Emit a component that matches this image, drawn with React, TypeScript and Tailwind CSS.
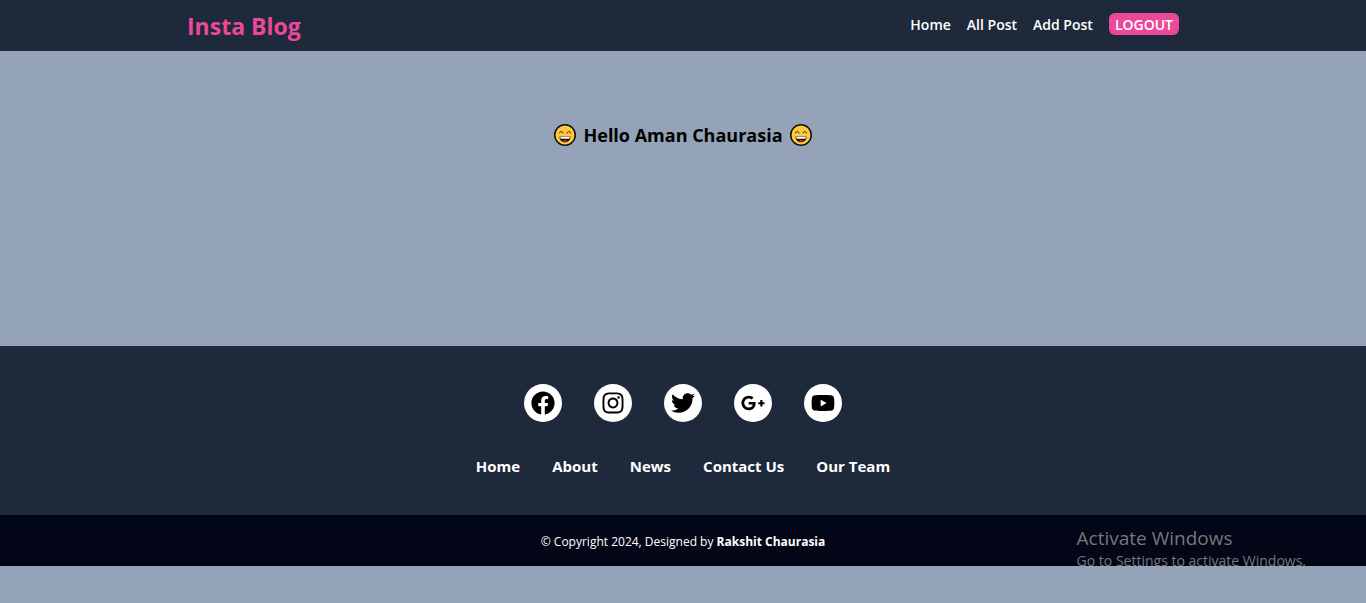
import React from "react";
import {
  FaFacebook,
  FaInstagram,
  FaTwitter,
  FaGooglePlusG,
  FaYoutube,
} from "react-icons/fa";

const navLinks = ["Home", "All Post", "Add Post"];
const footerLinks = ["Home", "About", "News", "Contact Us", "Our Team"];
const socials = [
  { name: "Facebook", Icon: FaFacebook },
  { name: "Instagram", Icon: FaInstagram },
  { name: "Twitter", Icon: FaTwitter },
  { name: "Google Plus", Icon: FaGooglePlusG },
  { name: "YouTube", Icon: FaYoutube },
];

function GrinFace() {
  return (
    <svg viewBox="0 0 44 44" className="size-[22px]" aria-hidden="true">
      <circle cx="22" cy="22" r="20.5" fill="#ffc83d" stroke="#111" strokeWidth="3" />
      <path
        d="M11 18c1.500-4 5.500-4 7 0M26 18c1.500-4 5.500-4 7 0"
        fill="none"
        stroke="#111"
        strokeWidth="2"
        strokeLinecap="round"
      />
      <path d="M11 25h22c0 7-4.500 11.500-11 11.500S11 32 11 25Z" fill="#111" />
      <path d="M12.500 25.500h19c0 2-.5 3-1 4h-17c-.5-1-1-2-1-4Z" fill="#fff" />
      <path d="M17 34c2-3 8-3 10 0-3 2-7 2-10 0Z" fill="#e8212e" />
    </svg>
  );
}

function Header() {
  return (
    <header className="bg-[#1e293b]">
      <div className="mx-auto flex h-[51px] max-w-[992px] items-center justify-between">
        <a href="#" className="text-[23px] leading-8 font-bold text-[#ec4899]">
          Insta Blog
        </a>
        <nav className="mb-[3px] flex items-center gap-4 text-sm leading-5 font-semibold text-white">
          {navLinks.map((label) => (
            <a key={label} href="#" className="pt-0.5">
              {label}
            </a>
          ))}
          <button type="button" className="rounded-md bg-[#ec4899] px-1.5 pt-0.5">
            LOGOUT
          </button>
        </nav>
      </div>
    </header>
  );
}

function Footer() {
  return (
    <footer>
      <div className="flex flex-col items-center bg-[#1e293b] pt-[38px] pb-[37px]">
        <ul className="flex gap-8">
          {socials.map(({ name, Icon }) => (
            <li key={name}>
              <a
                href="#"
                aria-label={name}
                className="flex size-[38px] items-center justify-center rounded-full bg-white text-black"
              >
                <Icon className="size-6" />
              </a>
            </li>
          ))}
        </ul>
        <ul className="mt-8 flex gap-8 text-[15px] leading-6 font-bold text-white">
          {footerLinks.map((label) => (
            <li key={label}>
              <a href="#">{label}</a>
            </li>
          ))}
        </ul>
      </div>
      <div className="relative overflow-hidden bg-[#020617] pt-[17px] pb-[15px] text-center text-xs leading-[19px] text-white">
        <p>
          © Copyright 2024, Designed by <span className="font-bold">Rakshit Chaurasia</span>
        </p>
        <div className="absolute top-2.5 right-[60px] text-left text-[#76777c]">
          <p className="text-[19px] leading-[26px]">Activate Windows</p>
          <p className="text-sm leading-5">Go to Settings to activate Windows.</p>
        </div>
      </div>
    </footer>
  );
}

export default function App() {
  return (
    <div className="min-h-screen bg-[#94a3b8] font-['Open_Sans','Noto_Sans',sans-serif]">
      <Header />
      <main className="flex h-[295px] justify-center pt-[70px]">
        <h1 className="flex h-7 items-center gap-[7px] text-lg font-bold text-black">
          <GrinFace />
          Hello Aman Chaurasia
          <GrinFace />
        </h1>
      </main>
      <Footer />
    </div>
  );
}
